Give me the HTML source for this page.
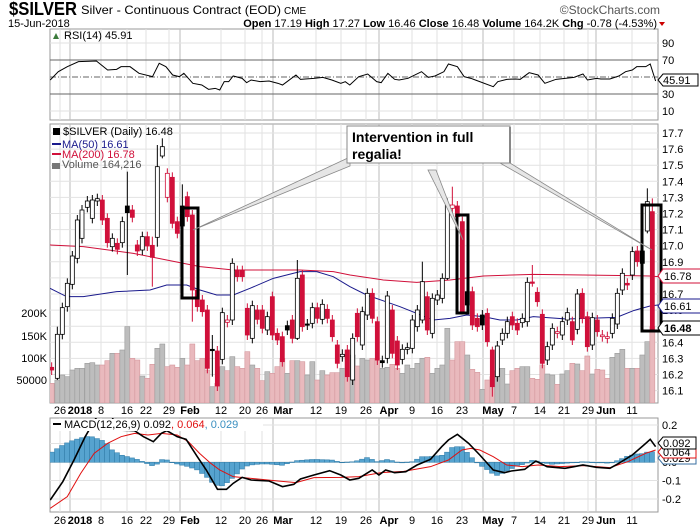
<!DOCTYPE html>
<html><head><meta charset="utf-8">
<style>
html,body{margin:0;padding:0;background:#fff;width:700px;height:530px;overflow:hidden}
svg{display:block;font-family:"Liberation Sans",Arial,sans-serif}
</style></head>
<body>
<svg id="s" width="700" height="530" viewBox="0 0 700 530" xmlns="http://www.w3.org/2000/svg">
<defs>
<clipPath id="cm"><rect x="50" y="124" width="608" height="279"/></clipPath>
<clipPath id="cd"><rect x="50" y="418" width="608" height="94"/></clipPath>
<clipPath id="cr"><rect x="50" y="29" width="608" height="91"/></clipPath>
</defs>
<g id="grid"></g>
<g id="vol" clip-path="url(#cm)"></g>
<g id="ma" clip-path="url(#cm)"></g>
<g id="cand" clip-path="url(#cm)"></g>
<g id="rsi" clip-path="url(#cr)"></g>
<g id="macd" clip-path="url(#cd)"></g>
<g id="over"></g>
<text x="9" y="15" font-size="18" font-weight="bold" textLength="68" lengthAdjust="spacingAndGlyphs">$SILVER</text>
<text x="81" y="14" font-size="12" textLength="200" lengthAdjust="spacingAndGlyphs">Silver - Continuous Contract (EOD)</text>
<text x="284" y="14" font-size="10">CME</text>
<text x="660" y="14" font-size="12" fill="#555" text-anchor="end">©StockCharts.com</text>
<text x="8" y="27" font-size="11">15-Jun-2018</text>
<text x="657" y="27" font-size="11" text-anchor="end"><tspan font-weight="bold">Open</tspan> 17.19 <tspan font-weight="bold">High</tspan> 17.27 <tspan font-weight="bold">Low</tspan> 16.46 <tspan font-weight="bold">Close</tspan> 16.48 <tspan font-weight="bold">Volume</tspan> 164.2K <tspan font-weight="bold">Chg</tspan> -0.78 (-4.53%)</text>
<polygon points="659,22 665,22 662,26" fill="#c00"/>
</svg>
<script>
const S=document.getElementById('s'),NS='http://www.w3.org/2000/svg';
function el(p,t,a,txt){const e=document.createElementNS(NS,t);for(const k in a)e.setAttribute(k,a[k]);if(txt!==undefined)e.textContent=txt;document.getElementById(p).appendChild(e);return e;}
const L=50,R=658;
el('grid','rect',{x:L,y:29,width:R-L,height:91,fill:'#fff',stroke:'#999'});
el('grid','rect',{x:L,y:124,width:R-L,height:279,fill:'#fff',stroke:'#999'});
el('grid','rect',{x:L,y:418,width:R-L,height:94,fill:'#fff',stroke:'#999'});
const dates=[[60,'26'],[80,'2018',1],[101,'8'],[127,'16'],[146,'22'],[169,'29'],[190,'Feb',1],[221,'12'],[245,'20'],[262,'26'],[283,'Mar',1],[316,'12'],[341,'19'],[366,'26'],[389,'Apr',1],[412,'9'],[437,'16'],[462,'23'],[493,'May',1],[514,'7'],[540,'14'],[564,'21'],[588,'29'],[606,'Jun',1],[632,'11']];
for(const d of dates){
 const gx=d[2]?d[0]-10:d[0];
 const col=d[2]?'#bbb':'#e2e2e2';
 for(const [a,b] of [[29,120],[124,403],[418,512]]) el('grid','line',{x1:gx,y1:a,x2:gx,y2:b,stroke:col});
 for(const yy of [414,524]) el('over','text',{x:d[0],y:yy,'font-size':11,'text-anchor':'middle','font-weight':d[2]?'bold':'normal'},d[1]);
}
const py=p=>133+(17.7-p)*161;
for(let i=0;i<=16;i++){const p=16.1+i*0.1,y=py(p);el('grid','line',{x1:L,y1:y,x2:R,y2:y,stroke:'#e2e2e2'});
 el('over','text',{x:662,y:y+4,'font-size':11},p.toFixed(1));}
for(const [v,y] of [['200K',313],['150K',336],['100K',358],['50000',380]]) el('over','text',{x:47,y:y+4,'font-size':11,'text-anchor':'end'},v);
const ry=v=>77-(v-50)*0.85;
for(const v of [90,10]){el('grid','line',{x1:L,y1:ry(v),x2:R,y2:ry(v),stroke:'#e2e2e2'});}
for(const v of [70,30]){el('grid','line',{x1:L,y1:ry(v),x2:R,y2:ry(v),stroke:'#666'});}
el('grid','line',{x1:L,y1:ry(50),x2:R,y2:ry(50),stroke:'#666','stroke-dasharray':'6,2,1,2'});
for(const v of [90,70,30,10]) el('over','text',{x:662,y:ry(v)+4,'font-size':11},v);
const my=v=>462-185*v;
for(const v of [0.2,0.1,0,-0.1,-0.2]){el('grid','line',{x1:L,y1:my(v),x2:R,y2:my(v),stroke:'#e2e2e2'});}
for(const [v,t] of [[0.2,'0.2'],[0,'0.0'],[-0.1,'-0.1'],[-0.2,'-0.2']]) el('over','text',{x:662,y:my(v)+4,'font-size':11},t);
const c2=[[155,742,750,'r'],[172,643,775,'w',620,780],[187,563,643,'w'],[202,490,560,'w'],[217,408,493,'w'],[232,300,415,'w'],[246,270,355,'w'],[262,243,262,'w'],[277,240,295,'w'],[292,236,243,'w'],[307,240,300,'r'],[322,295,368,'r'],[337,355,380,'w'],[352,370,388,'r'],[367,305,368,'w'],[382,258,278,'k',155,465],[397,270,292,'r'],[412,375,393,'r'],[427,350,390,'w'],[442,350,378,'r'],[457,376,412,'r',350,500],[472,140,352,'w',75,380],[487,80,108,'w',55,115],[502,160,232,'o'],[517,172,310,'r'],[532,305,340,'r'],[547,258,318,'k',193,330],[562,230,290,'r'],[577,285,510,'r',270,605],[592,510,560,'r'],[607,540,575,'r'],[622,570,745,'r'],[637,688,692,'k',645,770],[652,693,798,'r'],[667,578,718,'w'],[682,600,607,'o'],[697,430,600,'w'],[712,452,470,'r'],[727,452,470,'r'],[742,565,645,'r'],[757,557,655,'w'],[772,570,598,'r'],[787,570,625,'r'],[802,590,630,'w'],[817,530,645,'r'],[832,640,660,'r'],[847,650,725,'r'],[862,617,630,'k'],[877,600,655,'r'],[892,475,655,'w',420,660],[907,465,620,'r'],[922,612,615,'k'],[937,563,610,'w'],[952,563,595,'r'],[967,553,598,'w'],[982,568,595,'r'],[997,600,650,'r'],[1012,675,730,'r'],[1027,703,710,'w'],[1042,690,770,'r']];
const c3=[[8,655,780,'w'],[22,580,650,'r'],[37,575,675,'w'],[52,520,585,'w'],[67,520,595,'r'],[82,605,720,'r'],[97,722,728,'k'],[112,528,715,'w'],[127,570,700,'r'],[142,663,735,'r'],[157,688,718,'w'],[172,683,688,'w'],[187,600,685,'w'],[202,570,620,'w'],[217,485,600,'w',425,610],[232,530,630,'r'],[247,535,640,'w'],[262,525,540,'w'],[277,475,535,'w'],[292,255,475,'w',235,480],[307,255,265,'o',200,280],[322,258,290,'r'],[337,305,575,'r',290,580],[352,515,555,'k'],[367,515,615,'r'],[382,595,620,'r'],[397,585,615,'k'],[412,580,665,'r'],[427,690,800,'r',680,830],[442,678,770,'w'],[457,640,660,'w'],[472,605,640,'w'],[487,590,615,'r'],[502,610,630,'r'],[517,595,608,'w'],[532,487,605,'w'],[547,486,490,'r',435,500],[562,517,545,'r'],[577,583,730,'r'],[592,680,720,'w'],[607,625,675,'w'],[622,635,640,'o'],[637,605,645,'w'],[652,578,600,'w'],[667,605,660,'r'],[682,522,628,'w'],[697,520,595,'r'],[712,590,680,'r'],[727,593,675,'w'],[742,600,635,'r'],[757,645,650,'o'],[772,650,655,'o'],[787,595,640,'w'],[802,520,612,'w'],[817,460,510,'w'],[832,490,495,'r'],[847,395,465,'w'],[862,393,425,'r'],[877,393,430,'k'],[892,245,333,'w',205,340],[907,275,628,'r',235,632]];
const all=c2.map(c=>[c[0]/3,...c.slice(1)]).concat(c3.map(c=>[350+c[0]/3,...c.slice(1)]));
const zy=Y=>120+Y/3;
const RED='#d0103a';
const v2=[790,780,765,770,750,745,745,730,728,735,735,722,700,700,690,620,715,720,768,775,733,685,672,740,735,742,715,735,672,722,715,750,800,790,740,752,710,740,745,695,735,745,782,755,760,740,715,760,722,722,725,765,725,780,752,765,758,758,745,690];
const v3=[705,738,715,720,715,722,745,742,733,745,760,735,745,730,715,712,760,745,735,625,720,665,665,705,748,757,808,780,770,752,745,792,752,745,740,740,775,778,735,762,765,793,762,752,730,732,752,708,762,748,750,775,712,700,688,745,745,745,705,665,620];
const vols=v2.concat(v3);
all.forEach((c,i)=>{const t=vols[i]||800;const pink=(c[3]=='r'||c[3]=='o');
 el('vol','rect',{x:c[0]-2.5,y:zy(t),width:5,height:403-zy(t),fill:pink?'#e9b9bd':'#bdbdbd',stroke:pink?'#d4969c':'#9a9a9a','stroke-width':0.6});});
function pl(pts,f){return pts.map(p=>f(p).join(',')).join(' ');}
const ma200=[[150,375],[250,380],[400,400],[500,420],[600,440],[700,450],[900,450],[1000,455],[1050,465],[1150,480],[1250,487],[1350,480],[1450,468],[1600,463],[1750,465],[1950,468],[1975,470]];
const ma50=[[150,505],[200,530],[250,530],[350,515],[450,510],[500,495],[560,495],[600,510],[650,525],[700,525],[750,505],[820,475],[900,455],[950,455],[1000,470],[1050,500],[1100,525],[1200,560],[1300,600],[1350,595],[1400,585],[1450,590],[1500,600],[1550,600],[1600,590],[1700,597],[1850,592],[1900,572],[1950,558],[1975,555]];
el('ma','polyline',{points:pl(ma200,p=>[p[0]/3,zy(p[1])]),fill:'none',stroke:'#d0103a','stroke-width':1});
el('ma','polyline',{points:pl(ma50,p=>[p[0]/3,zy(p[1])]),fill:'none',stroke:'#1a1a8c','stroke-width':1});
all.forEach(c=>{const x=c[0],t=zy(c[1]),b=zy(c[2]);const hi=zy(c[4]!==undefined?c[4]:c[1]-15),lo=zy(c[5]!==undefined?c[5]:c[2]+15);
 const col=(c[3]=='r'||c[3]=='o')?RED:'#000';
 el('cand','line',{x1:x,y1:hi,x2:x,y2:lo,stroke:col,'stroke-width':1});
 const fill=c[3]=='r'?RED:c[3]=='k'?'#000':'#fff';
 el('cand','rect',{x:x-2,y:t,width:4,height:Math.max(b-t,1.2),fill:fill,stroke:col,'stroke-width':0.8});});
for(const [x,y,w,h] of [[182,208,16,90],[457,215,11,98],[642,205,19,126]]) el('over','rect',{x:x,y:y,width:w,height:h,fill:'none',stroke:'#000','stroke-width':3});
const pg=[[[350,157],[350,166],[193,230]],[[428,170],[436,170],[463,240]],[[500,163],[510,163],[652,250]]];
for(const p of pg) el('over','polygon',{points:p.map(q=>q.join(',')).join(' '),fill:'#e6e6e6',stroke:'#888','stroke-width':0.8});
el('over','rect',{x:347,y:126,width:163,height:37,fill:'#fff',stroke:'#888'});
el('over','line',{x1:510,y1:127,x2:510,y2:163,stroke:'#888','stroke-width':2});
el('over','text',{x:352,y:142,'font-size':14,'font-weight':'bold'},'Intervention in full');
el('over','text',{x:352,y:159,'font-size':14,'font-weight':'bold'},'regalia!');
el('over','text',{x:63,y:135,'font-size':11},'$SILVER (Daily) 16.48');
el('over','rect',{x:53,y:128,width:7,height:7,fill:'#000'});
el('over','line',{x1:52,y1:144,x2:61,y2:144,stroke:'#1a1a8c','stroke-width':2});
el('over','text',{x:62,y:148,'font-size':11,fill:'#1a1a8c'},'MA(50) 16.61');
el('over','line',{x1:52,y1:154,x2:61,y2:154,stroke:RED,'stroke-width':2});
el('over','text',{x:62,y:158,'font-size':11,fill:RED},'MA(200) 16.78');
el('over','rect',{x:52,y:163,width:8,height:6,fill:'#777'});
el('over','text',{x:62,y:168,'font-size':11,fill:'#555'},'Volume 164,216');
function tag(y,t,c,b){el('over','polygon',{points:`${R},${y} ${R+5},${y-7} ${R+45},${y-7} ${R+45},${y+7} ${R+5},${y+7}`,fill:'#fff',stroke:c});
 el('over','text',{x:R+6,y:y+4,'font-size':11,'font-weight':b?'bold':'normal'},t);}
tag(276,'16.78',RED);tag(306,'16.61','#1a1a8c');tag(328,'16.48','#000',1);
const rp=[[112,240],[130,215],[150,200],[175,185],[215,183],[240,210],[260,208],[270,200],[290,200],[310,220],[340,230],[355,190],[370,200],[385,225],[400,230],[410,220],[430,250],[450,255],[465,268],[480,265],[490,270],[500,245],[510,245],[520,228],[540,235],[550,248],[560,240],[580,245],[600,243],[620,250],[630,255],[640,245],[660,225],[670,238],[700,235],[720,232],[740,240],[760,250],[770,245],[780,255],[800,230],[820,222],[840,245],[850,248],[865,220],[880,238],[890,240],[910,235],[940,215],[955,232],[970,228],[990,215],[1000,192],[1020,200],[1035,230],[1050,235],[1060,240],[1100,260],[1110,245],[1130,238],[1150,237],[1160,238],[1180,218],[1200,225],[1215,250],[1240,238],[1260,235],[1280,232],[1300,222],[1310,240],[1330,235],[1340,237],[1360,237],[1380,228],[1395,215],[1410,210],[1420,200],[1440,200],[1450,192],[1462,243]];
el('rsi','polyline',{points:pl(rp,p=>[p[0]/2.23,p[1]/3]),fill:'none',stroke:'#000','stroke-width':1});
el('over','text',{x:64,y:39,'font-size':11},'RSI(14) 45.91');
el('over','polygon',{points:'53,39 56,33 59,39',fill:'#3a7a3a'});
el('over','polygon',{points:`${R},80 ${R+5},74 ${R+40},74 ${R+40},86 ${R+5},86`,fill:'#fff',stroke:'#000'});
el('over','text',{x:R+5,y:84,'font-size':11},'45.91');
const hp=[[112,160],[125,148],[140,135],[155,125],[170,118],[185,112],[200,108],[215,115],[235,125],[250,150],[270,165],[290,172],[310,180],[330,192],[345,200],[355,185],[365,175],[380,185],[395,192],[420,200],[440,210],[460,230],[475,250],[490,260],[500,255],[515,238],[530,220],[545,200],[560,195],[580,192],[600,192],[630,196],[660,182],[700,178],[740,180],[760,187],[790,185],[820,172],[840,185],[865,178],[890,188],[920,185],[940,170],[960,170],[990,165],[1010,140],[1030,140],[1050,170],[1070,195],[1090,212],[1105,228],[1120,220],[1150,200],[1180,187],[1190,178],[1200,185],[1230,193],[1260,190],[1300,185],[1340,188],[1360,190],[1380,180],[1400,168],[1420,162],[1440,160],[1450,147],[1462,172]];
function interp(pts,X){for(let i=0;i<pts.length-1;i++){if(X>=pts[i][0]&&X<=pts[i+1][0]){const f=(X-pts[i][0])/(pts[i+1][0]-pts[i][0]);return pts[i][1]+f*(pts[i+1][1]-pts[i][1]);}}return pts[pts.length-1][1];}
const z0=400+187/3;
for(let x=52;x<=652;x+=5){const Y=400+interp(hp,x*2.23)/3;const t=Math.min(Y,z0),h=Math.abs(Y-z0);
 el('macd','rect',{x:x-2.5,y:t,width:5,height:Math.max(h,0.5),fill:'#56a3cf',stroke:'#2f7aa6','stroke-width':0.5});}
const bk=[[112,300],[140,245],[165,180],[190,110],[205,75],[225,30],[245,30],[260,90],[300,92],[320,110],[342,125],[360,100],[372,92],[395,110],[415,118],[440,170],[460,210],[485,268],[505,268],[520,250],[540,232],[560,240],[600,243],[630,260],[655,253],[670,237],[700,225],[735,212],[760,225],[780,240],[800,235],[830,210],[845,225],[860,210],[880,218],[905,215],[930,195],[960,178],[985,140],[1000,120],[1020,103],[1045,130],[1070,165],[1090,195],[1100,210],[1125,218],[1140,213],[1170,208],[1195,183],[1220,200],[1260,205],[1280,200],[1300,195],[1330,202],[1360,205],[1380,190],[1410,165],[1440,130],[1450,118],[1462,140]];
const rd=[[112,325],[150,290],[180,220],[210,160],[240,130],[270,110],[300,100],[330,105],[360,100],[395,105],[420,125],[445,160],[470,190],[490,210],[520,230],[560,235],[620,243],[660,248],[700,233],[760,232],[800,230],[850,218],[900,214],[960,200],[1000,180],[1030,150],[1050,145],[1070,150],[1100,170],[1130,195],[1165,200],[1200,195],[1250,200],[1300,197],[1360,203],[1400,185],[1440,160],[1462,150]];
el('macd','polyline',{points:pl(rd,p=>[p[0]/2.23,400+p[1]/3]),fill:'none',stroke:'#e01010','stroke-width':1});
el('macd','polyline',{points:pl(bk,p=>[p[0]/2.23,400+p[1]/3]),fill:'none',stroke:'#000','stroke-width':1.6});
el('over','rect',{x:51,y:419,width:212,height:12,fill:'#fff'});
el('over','line',{x1:53,y1:424,x2:61,y2:424,stroke:'#000','stroke-width':2});
const mt=el('over','text',{x:64,y:428,'font-size':11});
mt.innerHTML='MACD(12,26,9) 0.092<tspan fill="#e01010">, 0.064</tspan><tspan fill="#3a8fc0">, 0.029</tspan>';
function mtag(y,t,c){el('over','polygon',{points:`${R},${y} ${R+5},${y-6} ${R+38},${y-6} ${R+38},${y+6} ${R+5},${y+6}`,fill:'#fff',stroke:c});
 el('over','text',{x:R+5,y:y+4,'font-size':11},t);}
mtag(458,'0.029','#3a6fa0');mtag(452,'0.064','#e01010');mtag(443,'0.092','#000');
</script>
</body></html>
